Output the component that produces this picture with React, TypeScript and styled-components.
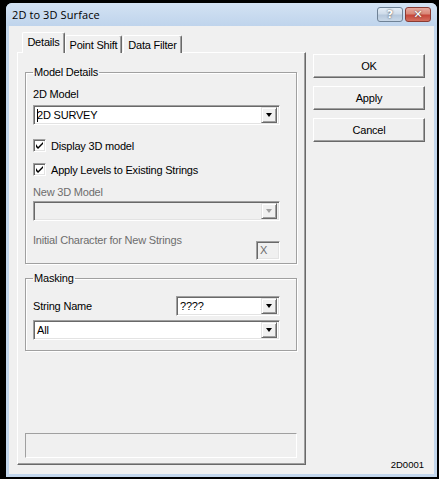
import React from 'react';
import styled, { createGlobalStyle } from 'styled-components';

const Global = createGlobalStyle`
  html, body { margin: 0; padding: 0; background: #000; }
  body {
    width: 439px; height: 479px; overflow: hidden;
    font-family: "Liberation Sans", Arial, sans-serif;
    font-size: 11px; color: #000;
  }
  * { box-sizing: border-box; }
`;

const Window = styled.div`
  margin: 3px 0 0 6px;
  width: 431px;
  height: 474px;
  display: flex;
  flex-direction: column;
  background: #c3d7ed;
  border-radius: 6px 6px 0 0;
  overflow: hidden;
`;

const TitleBar = styled.div`
  height: 23px;
  flex: none;
  display: flex;
  align-items: center;
  padding: 0 6px 0 6px;
  background: linear-gradient(#d3e2f3, #bfd4ec);
`;

const Title = styled.div`
  flex: 1;
  font-family: "Open Sans", "Liberation Sans", sans-serif;
  font-size: 11px;
  color: #000;
  letter-spacing: 0.1px;
`;

const CaptionButton = styled.div<{ $close?: boolean }>`
  width: 26px;
  height: 15px;
  margin-left: 2px;
  border-radius: 3px;
  border: 1px solid ${p => (p.$close ? '#8a3b33' : '#6f8296')};
  background: ${p =>
    p.$close
      ? 'linear-gradient(#e8a99f 0%, #d98878 45%, #c6463a 55%, #d3705f 100%)'
      : 'linear-gradient(#e4edf7 0%, #cfdcea 45%, #b6c8dc 55%, #c9d8e8 100%)'};
  display: flex;
  align-items: center;
  justify-content: center;
  color: #fff;
  font-family: "DejaVu Sans", sans-serif;
  font-weight: bold;
  font-size: 11px;
  line-height: 1;
  text-shadow: 0 0 2px #333;
`;

const Client = styled.div`
  flex: 1;
  margin: 0 3px 3px 3px;
  background: #f0f0f0;
  display: flex;
  padding: 7px 9px 3px 8px;
`;

const LeftCol = styled.div`
  width: 289px;
  flex: none;
  display: flex;
  flex-direction: column;
  margin-bottom: 6px;
`;

const TabRow = styled.div`
  height: 20px;
  display: flex;
  align-items: flex-end;
  padding-left: 5px;
  margin-bottom: -1px;
  position: relative;
  z-index: 1;
`;

const Tab = styled.div<{ $w: number; $active?: boolean }>`
  width: ${p => p.$w}px;
  height: ${p => (p.$active ? 21 : 18)}px;
  background: #f0f0f0;
  border-top: 1px solid #fff;
  border-left: 1px solid #fff;
  border-right: 1px solid #696969;
  box-shadow: inset -1px 0 #a0a0a0;
  border-radius: 2px 2px 0 0;
  margin-right: ${p => (p.$active ? 0 : 1)}px;
  display: flex;
  justify-content: center;
  padding-top: 3px;
  letter-spacing: -0.2px;
`;

const Panel = styled.div`
  flex: 1;
  display: flex;
  flex-direction: column;
  border-top: 1px solid #fff;
  border-left: 1px solid #fff;
  border-right: 1px solid #696969;
  border-bottom: 1px solid #696969;
  box-shadow: inset -1px -1px #a0a0a0;
  padding: 12px 8px 6px 7px;
`;

const Group = styled.fieldset<{ $gap?: number }>`
  margin: ${p => p.$gap ?? 0}px 0 0 0;
  padding: 9px 16px 3px 7px;
  border: 1px solid #a0a0a0;
  box-shadow: inset 1px 1px #fff, 1px 1px #fff;
  min-width: 0;
  display: flex;
  flex-direction: column;
`;

const Legend = styled.legend`
  padding: 0 1px;
  line-height: 14px;
  letter-spacing: -0.2px;
`;

const Label = styled.div<{ $disabled?: boolean; $gap?: number }>`
  line-height: 13px;
  margin-top: ${p => p.$gap ?? 0}px;
  color: ${p => (p.$disabled ? '#6d6d6d' : '#000')};
  letter-spacing: -0.2px;
  white-space: nowrap;
`;

const ComboBox = styled.div<{ $w?: number; $disabled?: boolean; $gap?: number }>`
  width: ${p => (p.$w ? `${p.$w}px` : '100%')};
  height: 20px;
  margin-top: ${p => p.$gap ?? 0}px;
  border: 1px solid;
  border-color: #a0a0a0 #fff #fff #a0a0a0;
  box-shadow: inset 1px 1px #696969, inset -1px -1px #e3e3e3;
  background: ${p => (p.$disabled ? '#f0f0f0' : '#fff')};
  display: flex;
  align-items: center;
  padding: 2px 2px 2px 3px;
`;

const ComboText = styled.div`
  flex: 1;
  display: flex;
  align-items: center;
  letter-spacing: -0.2px;
  white-space: nowrap;
`;

const Caret = styled.span`
  width: 1px;
  height: 13px;
  background: #000;
  margin-right: -1px;
`;

const ArrowButton = styled.div<{ $disabled?: boolean }>`
  width: 16px;
  height: 16px;
  flex: none;
  background: #f0f0f0;
  border: 1px solid;
  border-color: #e3e3e3 #696969 #696969 #e3e3e3;
  box-shadow: inset 1px 1px #fff, inset -1px -1px #a0a0a0;
  display: flex;
  align-items: center;
  justify-content: center;
  &::after {
    content: '';
    border-left: 3.5px solid transparent;
    border-right: 3.5px solid transparent;
    border-top: 4px solid ${p => (p.$disabled ? '#a0a0a0' : '#000')};
  }
`;

const CheckRow = styled.div<{ $gap?: number }>`
  display: flex;
  align-items: center;
  height: 17px;
  margin-top: ${p => p.$gap ?? 0}px;
  gap: 5px;
  letter-spacing: -0.2px;
`;

const CheckBox = styled.div`
  width: 13px;
  height: 13px;
  flex: none;
  background: #fff;
  border: 1px solid;
  border-color: #a0a0a0 #fff #fff #a0a0a0;
  box-shadow: inset 1px 1px #696969, inset -1px -1px #e3e3e3;
  display: flex;
  align-items: center;
  justify-content: center;
`;

const FieldRow = styled.div<{ $gap?: number; $align?: string }>`
  display: flex;
  justify-content: space-between;
  align-items: ${p => p.$align ?? 'center'};
  margin-top: ${p => p.$gap ?? 0}px;
`;

const TextBox = styled.div`
  width: 24px;
  height: 19px;
  margin-top: 7px;
  border: 1px solid;
  border-color: #a0a0a0 #fff #fff #a0a0a0;
  box-shadow: inset 1px 1px #696969, inset -1px -1px #e3e3e3;
  background: #f0f0f0;
  color: #6d6d6d;
  padding: 2px 0 0 3px;
  line-height: 13px;
`;

const StatusBox = styled.div`
  margin-top: auto;
  height: 25px;
  border: 1px solid;
  border-color: #a0a0a0 #fff #fff #a0a0a0;
`;

const RightCol = styled.div`
  width: 112px;
  flex: none;
  margin-left: 7px;
  display: flex;
  flex-direction: column;
  gap: 8px;
  padding-top: 21px;
`;

const Button = styled.div`
  height: 24px;
  border: 1px solid;
  border-color: #fff #696969 #696969 #fff;
  box-shadow: inset -1px -1px #a0a0a0;
  background: #f0f0f0;
  display: flex;
  align-items: center;
  justify-content: center;
  letter-spacing: -0.2px;
`;

const Code = styled.div`
  margin-top: auto;
  text-align: right;
  font-size: 9.5px;
  line-height: 12px;
  padding-right: 1px;
`;

const Check = () => (
  <svg width="7" height="7" viewBox="0 0 7 7">
    <path d="M0 2 L0 5 L2 7 L7 2 L7 0 L2 5 Z" fill="#000" />
  </svg>
);

export default function App() {
  return (
    <>
      <Global />
      <Window>
        <TitleBar>
          <Title>2D to 3D Surface</Title>
          <CaptionButton>?</CaptionButton>
          <CaptionButton $close>✕</CaptionButton>
        </TitleBar>
        <Client>
          <LeftCol>
            <TabRow>
              <Tab $w={43} $active>Details</Tab>
              <Tab $w={57}>Point Shift</Tab>
              <Tab $w={59}>Data Filter</Tab>
            </TabRow>
            <Panel>
              <Group>
                <Legend>Model Details</Legend>
                <Label>2D Model</Label>
                <ComboBox $gap={4}>
                  <ComboText><Caret />2D SURVEY</ComboText>
                  <ArrowButton />
                </ComboBox>
                <CheckRow $gap={12}>
                  <CheckBox><Check /></CheckBox>
                  Display 3D model
                </CheckRow>
                <CheckRow $gap={7}>
                  <CheckBox><Check /></CheckBox>
                  Apply Levels to Existing Strings
                </CheckRow>
                <Label $disabled $gap={8}>New 3D Model</Label>
                <ComboBox $disabled $gap={2}>
                  <ComboText />
                  <ArrowButton $disabled />
                </ComboBox>
                <FieldRow $gap={13} $align="flex-start">
                  <Label $disabled>Initial Character for New Strings</Label>
                  <TextBox>X</TextBox>
                </FieldRow>
              </Group>
              <Group $gap={7}>
                <Legend>Masking</Legend>
                <FieldRow $gap={2}>
                  <Label>String Name</Label>
                  <ComboBox $w={104}>
                    <ComboText>????</ComboText>
                    <ArrowButton />
                  </ComboBox>
                </FieldRow>
                <ComboBox $gap={4}>
                  <ComboText>All</ComboText>
                  <ArrowButton />
                </ComboBox>
                <div style={{ height: 7 }} />
              </Group>
              <StatusBox />
            </Panel>
          </LeftCol>
          <RightCol>
            <Button>OK</Button>
            <Button>Apply</Button>
            <Button>Cancel</Button>
            <Code>2D0001</Code>
          </RightCol>
        </Client>
      </Window>
    </>
  );
}
